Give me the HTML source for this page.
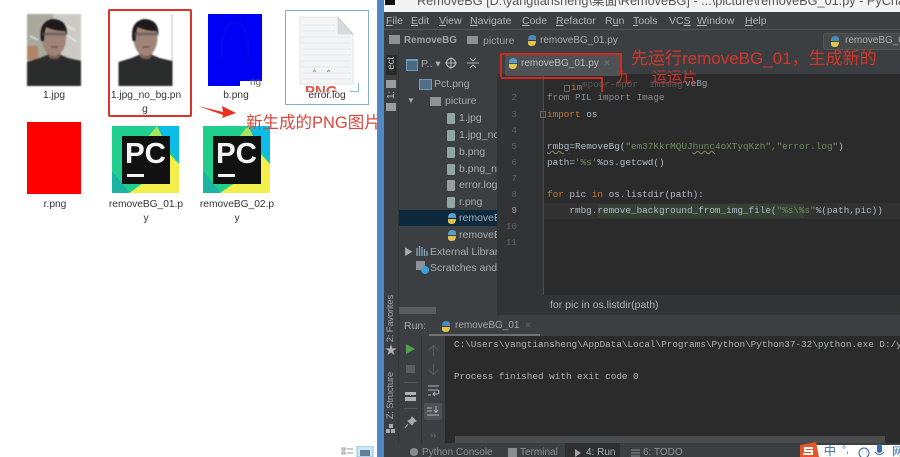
<!DOCTYPE html>
<html><head><meta charset="utf-8">
<style>
html,body{margin:0;padding:0;background:#fff}
#r{position:relative;width:900px;height:457px;overflow:hidden;background:#fff;font-family:"Liberation Sans","Noto Sans CJK SC",sans-serif;filter:blur(.3px)}
#r div,#r svg{position:absolute}
.t{white-space:nowrap;line-height:14px}
.l{font-size:10.2px;color:#333;text-align:center;line-height:14px;white-space:nowrap}
.m{font-size:10.5px;color:#b4b7b9;white-space:nowrap;line-height:14px;top:14px}
.tr{font-size:10.5px;color:#a8adb0;white-space:nowrap;line-height:14px}
.c{font-family:"Liberation Mono",monospace;font-size:9.33px;line-height:14px;color:#b0bcc8;white-space:pre}
.n{font-family:"Liberation Mono",monospace;font-size:9.33px;line-height:14px;color:#5c6062;white-space:pre;text-align:right;width:20px;left:497px}
.k{color:#c4773a}.g{color:#6f8d5e}
.u{text-decoration:underline wavy #8a8a50 .6px}
.v{writing-mode:vertical-rl;transform:rotate(180deg);font-size:9.5px;letter-spacing:-.2px;color:#a3a7a9;white-space:nowrap;line-height:12px}
.b{font-size:10px;color:#8f9395;white-space:nowrap;line-height:14px;top:446px}
.rd{color:#d93a2e;white-space:nowrap;font-family:"Liberation Sans","Noto Sans CJK SC",sans-serif}
.f{width:8px;height:11px;background:#8fa7a0;border-radius:1px}
.f2{width:8px;height:11px;background:#9a9ea1;border-radius:1px}
</style></head><body><div id="r">

<!-- left explorer -->
<svg style="left:27px;top:14px;filter:blur(.8px)" width="54" height="72" viewBox="0 0 54 72">
<rect width="54" height="72" fill="#a9a99c"/><rect x="26" width="28" height="46" fill="#cbcac4"/><rect y="32" width="11" height="14" fill="#b0856a"/><path d="M3 22l8 4M36 10l12 6M38 20l12 8" stroke="#e8e8e4" stroke-width="1.500"/>
<path d="M0 72V48L13 44 20 41H34L41 44 54 47V72Z" fill="#2a2b2b"/>
<path d="M20 36Q20 44 25 45H30Q34 44 34 36Z" fill="#7d5f52"/>
<ellipse cx="27" cy="24" rx="12" ry="18" fill="#9f8577"/>
<path d="M14 27Q11 8 25 5 41 5 40 22L38 17Q28 17 19 13 17 19 17 27Z" fill="#1c1a1a"/>
<path d="M15 20H40" stroke="#555" stroke-width="3" opacity=".6"/>
<path d="M24 33H31" stroke="#6d4a40" stroke-width="1.300"/>
</svg>
<div class="l" style="left:27px;top:89px;width:54px">1.jpg</div>

<svg style="left:118px;top:14px;filter:blur(.8px)" width="55" height="72" viewBox="0 0 54 72">
<rect width="54" height="72" fill="#fff"/><rect x="53" width="1" height="72" fill="#bbb"/>
<path d="M0 72V48L13 44 20 41H34L41 44 54 47V72Z" fill="#2a2b2b"/>
<path d="M20 36Q20 44 25 45H30Q34 44 34 36Z" fill="#7d5f52"/>
<ellipse cx="27" cy="24" rx="12" ry="18" fill="#9f8577"/>
<path d="M14 27Q11 8 25 5 41 5 40 22L38 17Q28 17 19 13 17 19 17 27Z" fill="#1c1a1a"/>
<path d="M15 20H40" stroke="#555" stroke-width="3" opacity=".6"/>
<path d="M24 33H31" stroke="#6d4a40" stroke-width="1.300"/>
</svg>
<div class="l" style="left:108px;top:89px;width:76px">1.jpg_no_bg.pn</div>
<div class="l" style="left:116px;top:103px;width:58px">g</div>
<div style="left:108px;top:9px;width:80px;height:104px;border:2px solid #d9342b;border-radius:2px"></div>

<div style="left:208px;top:14px;width:54px;height:72px;background:#0000f4"></div>
<svg style="left:208px;top:14px;filter:blur(.6px)" width="54" height="72" viewBox="0 0 54 72"><path d="M14 45Q13 8 27 8 41 8 40 45" stroke="#1111e0" fill="none"/></svg>
<div style="left:240px;top:81px;width:22px;height:5px;background:#fff"></div>
<div class="l" style="left:250px;top:76px;color:#666;font-size:10px">ng</div>
<div class="l" style="left:208px;top:89px;width:56px">b.png</div>

<div style="left:285px;top:10px;width:82px;height:93px;border:1px solid #7fb0cf"></div>
<svg style="left:299px;top:16px;filter:blur(.3px)" width="55" height="72" viewBox="0 0 55 72">
<path d="M1 1H39L54 18V68H1Z" fill="#f4f5f7" stroke="#e4e6e9"/>
<path d="M39 1V18H54Z" fill="#d6d9dd" stroke="#c8ccd0" stroke-width=".6"/>
<g stroke="#dcdfe5" stroke-width=".7"><path d="M3 9H36M3 15H36M3 21H52M3 27H52M3 33H52M3 39H52M3 45H52M3 51H52M3 57H52M3 63H52"/></g>
<path d="M14 56l1.500-2 1.500 2M28 56l1.500-2 1.500 2" stroke="#888" fill="none" stroke-width=".8"/>
</svg>
<div class="rd" style="left:305px;top:84px;font-size:15px;line-height:16px;font-weight:bold;opacity:.85">PNG</div>
<svg style="left:348px;top:82px" width="12" height="11" viewBox="0 0 12 11"><path d="M10.500 1V9.500H2" stroke="#8fb8d2" fill="none"/></svg>
<div style="left:303px;top:92px;width:48px;height:11px;background:#fff"></div>
<div class="l" style="left:285px;top:89px;width:84px">error.log</div>

<div style="left:27px;top:122px;width:54px;height:72px;background:#fe0000"></div>
<div class="l" style="left:27px;top:198px;width:56px">r.png</div>

<svg style="left:112px;top:126px" width="67" height="67" viewBox="0 0 67 67">
<rect width="67" height="67" fill="#20cf8e"/><path d="M0 45L18 67H0Z" fill="#1bb3a2"/><path d="M46 0H67V38L52 14Z" fill="#0cbde8"/><path d="M30 18L45 0 52 14 40 30Z" fill="#a9e25c"/><path d="M50 20L67 38V67H17L30 58Z" fill="#f2ef4d"/>
<rect x="10" y="10" width="48" height="48" fill="#111"/><text x="13" y="37" font-family="Liberation Sans" font-weight="bold" font-size="29" fill="#f4f4f4" textLength="41" lengthAdjust="spacingAndGlyphs">PC</text><rect x="15" y="48" width="17" height="3" fill="#f4f4f4"/>
</svg>
<div class="l" style="left:100px;top:198px;width:92px">removeBG_01.p</div>
<div class="l" style="left:100px;top:212px;width:92px">y</div>

<svg style="left:203px;top:126px" width="67" height="67" viewBox="0 0 67 67">
<rect width="67" height="67" fill="#20cf8e"/><path d="M0 45L18 67H0Z" fill="#1bb3a2"/><path d="M46 0H67V38L52 14Z" fill="#0cbde8"/><path d="M30 18L45 0 52 14 40 30Z" fill="#a9e25c"/><path d="M50 20L67 38V67H17L30 58Z" fill="#f2ef4d"/>
<rect x="10" y="10" width="48" height="48" fill="#111"/><text x="13" y="37" font-family="Liberation Sans" font-weight="bold" font-size="29" fill="#f4f4f4" textLength="41" lengthAdjust="spacingAndGlyphs">PC</text><rect x="15" y="48" width="17" height="3" fill="#f4f4f4"/>
</svg>
<div class="l" style="left:191px;top:198px;width:92px">removeBG_02.p</div>
<div class="l" style="left:191px;top:212px;width:92px">y</div>

<svg style="left:197px;top:103px" width="40" height="17" viewBox="0 0 40 17"><path d="M1 3L26 9 25 3 39 10 25 15 26 12Z" fill="#e8321f"/></svg>
<div class="rd" style="left:246px;top:113px;font-size:16.500px;line-height:20px;color:#d9473b">新生成的PNG图片</div>

<!-- bottom view icons -->
<svg style="left:340px;top:446px" width="36" height="11" viewBox="0 0 36 11"><path d="M2 2h3v2H2zM2 6h3v2H2zM7 3h6M7 7h6" stroke="#999" fill="none"/><rect x="17" y="0" width="16" height="11" fill="#cfe6f5" stroke="#8fc0de"/><rect x="20" y="4" width="10" height="6" fill="#5e7f96"/></svg>

<!-- blue border + IDE -->
<div style="left:377px;top:0;width:7px;height:457px;background:#4f88c4"></div>
<div style="left:384px;top:0;width:516px;height:12px;background:#f3f3f3;overflow:hidden">
  <div style="left:1px;top:0;width:10px;height:5px;background:#111"></div>
  <div class="t" style="left:33px;top:-6px;font-size:12.700px;color:#555">RemoveBG [D:\yangtiansheng\桌面\RemoveBG] - ...\picture\removeBG_01.py - PyCharm</div>
</div>
<div style="left:384px;top:12px;width:516px;height:431px;background:#3c3f41"></div>
<div style="left:384px;top:29px;width:516px;height:1px;background:#515456"></div>
<div class="m" style="left:386px"><u>F</u>ile</div><div class="m" style="left:411px"><u>E</u>dit</div><div class="m" style="left:439px"><u>V</u>iew</div><div class="m" style="left:470px"><u>N</u>avigate</div><div class="m" style="left:522px"><u>C</u>ode</div><div class="m" style="left:556px"><u>R</u>efactor</div><div class="m" style="left:605px">R<u>u</u>n</div><div class="m" style="left:633px"><u>T</u>ools</div><div class="m" style="left:669px">VC<u>S</u></div><div class="m" style="left:697px"><u>W</u>indow</div><div class="m" style="left:745px"><u>H</u>elp</div>

<!-- breadcrumb -->
<div style="left:389px;top:35px;width:11px;height:9px;background:#8d9294"></div>
<div class="t" style="left:404px;top:34px;font-size:9.800px;font-weight:bold;color:#9ea2a4">RemoveBG</div>
<div style="left:467px;top:36px;width:11px;height:8px;background:#8d9294"></div>
<div class="t" style="left:483px;top:34px;font-size:10.500px;color:#9ea2a4">picture</div>
<svg style="left:526px;top:34px" width="12" height="13" viewBox="0 0 12 13"><path d="M2 6Q2 1 6 1T10 4V6H5" fill="#4a8bb8"/><path d="M10 7Q10 12 6 12T2 9V7H7" fill="#e3c44b"/></svg>
<div class="t" style="left:540px;top:34px;font-size:10px;color:#a9adb0">removeBG_01.py</div>
<div style="left:823px;top:33px;width:90px;height:15px;border:1px solid #555;border-radius:3px;background:#45494a"></div>
<svg style="left:829px;top:35px" width="12" height="13" viewBox="0 0 12 13"><path d="M2 6Q2 1 6 1T10 4V6H5" fill="#4a8bb8"/><path d="M10 7Q10 12 6 12T2 9V7H7" fill="#e3c44b"/></svg>
<div class="t" style="left:845px;top:34px;font-size:10px;color:#a9adb0">removeBG_01.py</div>

<!-- left stripe -->
<div style="left:398px;top:52px;width:1px;height:391px;background:#323436"></div>
<div style="left:386px;top:55px;width:11px;height:20px;background:#292a2b"></div>
<div class="v" style="left:386px;top:57px;font-size:10px;color:#bbb">ect</div>
<div style="left:386px;top:80px;width:10px;height:8px;background:#9a9da0"></div>
<div class="v" style="left:386px;top:91px;font-size:10px;color:#bbb">1:</div>
<div style="left:386px;top:103px;width:10px;height:8px;background:#9a9da0"></div>
<div class="v" style="left:385px;top:295px">2: Favorites</div>
<div class="t" style="left:385px;top:343px;font-size:12px;color:#aeb1b3">★</div>
<div class="v" style="left:385px;top:372px">Z: Structure</div>
<svg style="left:386px;top:424px" width="10" height="10" viewBox="0 0 10 10"><path d="M3 0h4v4H3zM0 5h4v4H0zM5 5h4v4H5z" fill="#a6a9ab"/></svg>

<!-- project panel -->
<div style="left:399px;top:52px;width:98px;height:243px;background:#3c3f41;overflow:hidden">
  <div style="left:7px;top:7px;width:10px;height:9px;border:1px solid #6a9fc0;border-top-width:2px;background:#4a6a80"></div>
  <div class="tr" style="left:22px;top:5px">P.. ▾</div>
  <svg style="left:46px;top:5px" width="12" height="12" viewBox="0 0 12 12"><circle cx="6" cy="6" r="4.500" stroke="#aeb1b3" fill="none" stroke-width="1.300"/><path d="M6 0V12M0 6H12" stroke="#aeb1b3"/></svg>
  <svg style="left:68px;top:5px" width="12" height="12" viewBox="0 0 12 12"><path d="M0 6H12M3 1l3 3 3-3M3 11l3-3 3 3" stroke="#aeb1b3" fill="none"/></svg>
  <div style="left:0;top:158px;width:98px;height:16px;background:#0d293e"></div>
  <div style="left:20px;top:27px;width:11px;height:9px;background:#4e6f86;border:1px solid #6d9dbb"></div>
  <div class="tr" style="left:35px;top:25px">Pct.png</div>
  <div class="tr" style="left:8px;top:42px;font-size:8px">▼</div>
  <div style="left:31px;top:45px;width:11px;height:9px;background:#8d9294"></div>
  <div class="tr" style="left:46px;top:42px">picture</div>
  <div class="f" style="left:48px;top:61px"></div><div class="tr" style="left:60px;top:59px">1.jpg</div>
  <div class="f" style="left:48px;top:78px"></div><div class="tr" style="left:60px;top:76px">1.jpg_no_bg.png</div>
  <div class="f" style="left:48px;top:95px"></div><div class="tr" style="left:60px;top:93px">b.png</div>
  <div class="f" style="left:48px;top:112px"></div><div class="tr" style="left:60px;top:110px">b.png_no_bg</div>
  <div class="f2" style="left:48px;top:128px"></div><div class="tr" style="left:60px;top:126px">error.log</div>
  <div class="f" style="left:48px;top:145px"></div><div class="tr" style="left:60px;top:143px">r.png</div>
  <svg style="left:47px;top:160px" width="12" height="13" viewBox="0 0 12 13"><path d="M2 6Q2 1 6 1T10 4V6H5" fill="#5a9dc8"/><path d="M10 7Q10 12 6 12T2 9V7H7" fill="#e3c44b"/></svg><div class="tr" style="left:60px;top:159px">removeBG_01.py</div>
  <svg style="left:47px;top:177px" width="12" height="13" viewBox="0 0 12 13"><path d="M2 6Q2 1 6 1T10 4V6H5" fill="#5a9dc8"/><path d="M10 7Q10 12 6 12T2 9V7H7" fill="#e3c44b"/></svg><div class="tr" style="left:60px;top:176px">removeBG_02.py</div>
  <div class="tr" style="left:5px;top:193px;font-size:9px">▶</div>
  <svg style="left:17px;top:193px" width="12" height="12" viewBox="0 0 12 12"><path d="M1 3v8M3.500 1v10M6 2v9M8.500 4v7M11 6v5" stroke="#7ea7b8" stroke-width="1.300"/></svg>
  <div class="tr" style="left:31px;top:193px">External Libraries</div>
  <svg style="left:17px;top:209px" width="13" height="13" viewBox="0 0 13 13"><rect width="9" height="9" fill="#8d9294"/><circle cx="9" cy="9" r="4" fill="#3b9fd8"/></svg>
  <div class="tr" style="left:31px;top:209px">Scratches and</div>
</div>

<!-- editor -->
<div style="left:497px;top:74px;width:46px;height:221px;background:#313335"></div>
<div style="left:543px;top:74px;width:1px;height:221px;background:#4b4e50"></div>
<div style="left:544px;top:74px;width:356px;height:221px;background:#2b2b2b"></div>
<div style="left:544px;top:203px;width:356px;height:16px;background:#323232"></div>
<div style="left:497px;top:52px;width:403px;height:22px;background:#3c3f41"></div>
<div style="left:505px;top:54px;width:115px;height:22px;background:#4e5254"></div>
<svg style="left:507px;top:57px" width="12" height="13" viewBox="0 0 12 13"><path d="M2 6Q2 1 6 1T10 4V6H5" fill="#5a9dc8"/><path d="M10 7Q10 12 6 12T2 9V7H7" fill="#e3c44b"/></svg>
<div class="t" style="left:521px;top:57px;font-size:10px;color:#bbbfc1">removeBG_01.py</div>
<div class="t" style="left:604px;top:57px;font-size:10px;color:#777">×</div>
<svg style="left:498px;top:50px" width="130" height="50" viewBox="0 0 130 50"><path d="M3 27V4H123V24M3 28H104V42" fill="none" stroke="#d0291f" stroke-width="2"/></svg>

<div class="n" style="top:91px">2</div><div class="n" style="top:108px">3</div><div class="n" style="top:124px">4</div><div class="n" style="top:140px">5</div><div class="n" style="top:156px">6</div><div class="n" style="top:172px">7</div><div class="n" style="top:188px">8</div><div class="n" style="top:204px;color:#a4a3a3">9</div><div class="n" style="top:220px">10</div><div class="n" style="top:236px">11</div>

<div style="left:564px;top:85px;width:4px;height:5px;border:1px solid #666"></div>
<div style="left:540px;top:111px;width:4px;height:5px;border:1px solid #666"></div>
<div class="c" style="left:571px;top:81px;color:#c4773a">im</div>
<div class="c" style="left:582px;top:78px;color:#777;opacity:.6">mpoor-mpor  imImag</div>
<div class="c" style="left:685px;top:77px;color:#9aa3ab">veBg</div>
<div class="c" style="left:547px;top:91px;color:#8a8f92">from PIL import Image</div>
<div class="c" style="left:547px;top:108px"><span class="k">import</span> os</div>
<div class="c" style="left:547px;top:140px"><span class="u">rmbg</span>=RemoveBg(<span class="g">"em37KkrMQUJ<span class="u">hunc</span>4oXTyqKzh"</span><span class="k">,</span><span class="g">"error.log"</span>)</div>
<div class="c" style="left:547px;top:156px">path=<span class="g">'%s'</span>%os.getcwd()</div>
<div class="c" style="left:547px;top:188px"><span class="k">for</span> pic <span class="k">in</span> os.listdir(path):</div>
<div style="left:598px;top:204px;width:206px;height:14px;background:#344134"></div>
<div class="c" style="left:547px;top:204px">    rmbg.remove_background_from_img_file(<span class="g">"%s\%s"</span>%(path,pic))</div>

<div class="rd" style="left:631px;top:49px;font-size:17px;line-height:20px;color:#d2352a">先运行removeBG_01，生成新的</div>
<div class="rd" style="left:616px;top:70px;font-size:15px;line-height:16px;height:15px;overflow:hidden;color:#c8352a">九</div>
<div class="rd" style="left:652px;top:70px;font-size:15px;line-height:16px;height:15px;overflow:hidden;color:#c8352a">运运片</div>

<!-- breadcrumb bottom -->
<div style="left:497px;top:295px;width:403px;height:20px;background:#313335"></div>
<div style="left:399px;top:295px;width:98px;height:20px;background:#3c3f41"></div>
<div style="left:399px;top:307px;width:37px;height:7px;background:#5a5d5f"></div>
<div class="t" style="left:550px;top:298px;font-size:10.500px;color:#b0b3b5">for pic in os.listdir(path)</div>

<!-- run -->
<div style="left:399px;top:315px;width:501px;height:21px;background:#3c3f41"></div>
<div class="t" style="left:404px;top:319px;font-size:10.500px;color:#a5a8aa">Run:</div>
<svg style="left:440px;top:320px" width="12" height="13" viewBox="0 0 12 13"><path d="M2 6Q2 1 6 1T10 4V6H5" fill="#4a8bb8"/><path d="M10 7Q10 12 6 12T2 9V7H7" fill="#e3c44b"/></svg>
<div class="t" style="left:455px;top:319px;font-size:10px;color:#a5a8aa">removeBG_01</div>
<div class="t" style="left:525px;top:319px;font-size:10px;color:#666">×</div>
<div style="left:429px;top:334px;width:111px;height:2px;background:#6f7274"></div>
<div style="left:399px;top:336px;width:46px;height:107px;background:#3c3f41"></div>
<div style="left:421px;top:336px;width:1px;height:107px;background:#323436"></div>
<svg style="left:405px;top:343px" width="11" height="12" viewBox="0 0 11 12"><path d="M1 1L10 6 1 11Z" fill="#4fa04f"/></svg>
<div style="left:406px;top:365px;width:9px;height:8px;background:#5c5e60"></div>
<div style="left:404px;top:382px;width:13px;height:1px;background:#555"></div>
<svg style="left:405px;top:392px" width="11" height="9" viewBox="0 0 11 9"><path d="M0 0h11v3H6V4H5V3H0zM0 5h11v4H0z" fill="#b0b3b5"/></svg>
<div style="left:404px;top:408px;width:13px;height:1px;background:#555"></div>
<svg style="left:404px;top:416px" width="13" height="13" viewBox="0 0 13 13"><path d="M8 1l4 4-2 1-2 3-4-4 3-2zM4 8l-3 4" stroke="#a6a9ab" fill="#a6a9ab"/></svg>
<svg style="left:427px;top:344px" width="13" height="13" viewBox="0 0 13 13"><path d="M6.500 12V2M2 6l4.500-4.500L11 6" stroke="#55585a" fill="none" stroke-width="1.200"/></svg>
<svg style="left:427px;top:363px" width="13" height="13" viewBox="0 0 13 13"><path d="M6.500 1V11M2 7l4.500 4.500L11 7" stroke="#55585a" fill="none" stroke-width="1.200"/></svg>
<svg style="left:428px;top:385px" width="12" height="12" viewBox="0 0 12 12"><path d="M0 1H11M0 5H9Q11 5 11 7T9 9H6M7 7L5 9l2 2M0 10H3" stroke="#b0b3b5" fill="none"/></svg>
<div style="left:424px;top:403px;width:18px;height:17px;background:#4e5254;border-radius:2px"></div>
<svg style="left:427px;top:406px" width="13" height="11" viewBox="0 0 13 11"><path d="M0 2H5M0 5H5M0 9H12M9 0V6M7 4l2 2.500L11 4" stroke="#b0b3b5" fill="none"/></svg>
<div class="t" style="left:430px;top:428px;font-size:9px;color:#777">››</div>

<div style="left:445px;top:336px;width:455px;height:107px;background:#2b2b2b"></div>
<div class="c" style="left:454px;top:338px;color:#b0b3b5">C:\Users\yangtiansheng\AppData\Local\Programs\Python\Python37-32\python.exe D:/yangtiansheng</div>
<div class="c" style="left:454px;top:370px;color:#b0b3b5">Process finished with exit code 0</div>
<div style="left:455px;top:436px;width:430px;height:7px;background:#4a4c4e"></div>

<!-- bottom tabs -->
<div style="left:384px;top:443px;width:516px;height:14px;background:#3c3f41"></div>
<div style="left:565px;top:443px;width:55px;height:14px;background:#2d2f30"></div>
<svg style="left:409px;top:448px" width="10" height="9" viewBox="0 0 10 9"><path d="M1 4Q1 0 5 0T9 4 5 8 1 4Z" fill="#8a8d8f"/></svg>
<div class="b" style="left:422px">Python Console</div>
<div style="left:508px;top:448px;width:9px;height:9px;background:#8a8d8f"></div>
<div class="b" style="left:520px">Terminal</div>
<svg style="left:574px;top:449px" width="8" height="8" viewBox="0 0 8 8"><path d="M1 0L7 4 1 8Z" fill="#a5a8aa"/></svg>
<div class="b" style="left:586px;color:#b3b6b8">4: Run</div>
<svg style="left:631px;top:449px" width="9" height="8" viewBox="0 0 9 8"><path d="M0 1H9M0 4H9M0 7H9" stroke="#8a8d8f"/></svg>
<div class="b" style="left:643px">6: TODO</div>

<!-- sogou -->
<div style="left:800px;top:445px;width:100px;height:12px;background:#fff"></div>
<svg style="left:797px;top:442px" width="103" height="15" viewBox="0 0 103 15">
<path d="M3 3L19 0 22 15H3Z" fill="#e8552a"/><path d="M16 6H8V9H15V12H6" stroke="#fff" stroke-width="2" fill="none"/>
<circle cx="67" cy="11" r="5" stroke="#3a5f9a" fill="none"/><path d="M65 10h.5M69 10h.5" stroke="#3a5f9a"/>
<rect x="80" y="2" width="5" height="9" rx="2.500" fill="#3568b0"/><path d="M78 10Q82.500 15 87 10" stroke="#3568b0" fill="none"/>
</svg>
<div class="t" style="left:824px;top:444px;font-size:12px;color:#3568b0">中</div>
<div class="t" style="left:842px;top:444px;font-size:10px;color:#3568b0">°,</div>
<div class="t" style="left:892px;top:445px;font-size:11px;color:#3568b0">网</div>

</div></body></html>
